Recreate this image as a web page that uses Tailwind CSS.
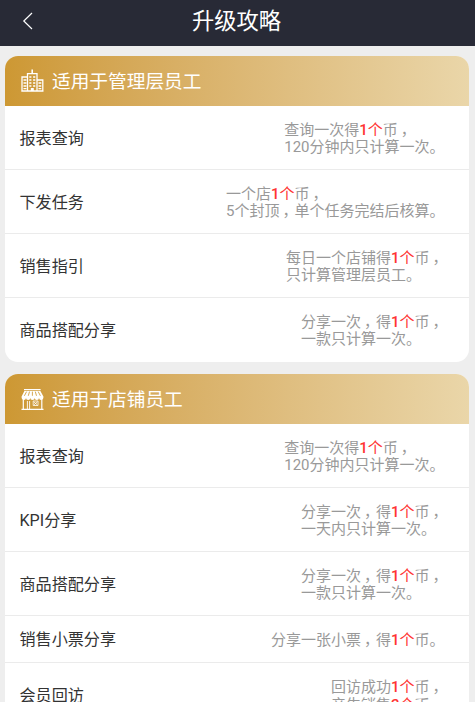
<!DOCTYPE html>
<html lang="zh-CN">
<head>
  <meta charset="UTF-8" />
  <meta name="viewport" content="width=device-width, initial-scale=1.0"/>
  <title>升级攻略</title>
  <script src="https://cdn.jsdelivr.net/npm/@tailwindcss/browser@4"></script>
  <style>
    body {
      font-family: Roboto, "Noto Sans CJK SC", sans-serif;
    }
  </style>
</head>
<body class="bg-[#eeeeee] h-[702px] overflow-hidden">

  <header class="h-[46px] bg-[#282a36] text-white grid grid-cols-[1fr_auto_1fr] items-center">
    <svg class="ml-[22px] -mt-1 w-3 h-[18px]" viewBox="0 0 12 18" fill="none" stroke="currentColor" stroke-width="1.2">
      <path d="M10 1 L1.8 9 L10 17" />
    </svg>
    <h1 class="text-[22.3px] leading-[42px] pb-1 pr-[2px]">升级攻略</h1>
  </header>

  <main class="pt-[10px] pl-[4.5px] pr-[6.5px] space-y-[12.5px]">

    <section class="bg-white rounded-[13px] overflow-hidden">
      <div class="h-[50px] pl-4 flex items-center bg-linear-to-r from-[#cd9833] to-[#ead6a9] text-white">
        <svg class="w-[23px] h-[23px] mr-[8.5px] -mt-px" viewBox="0 0 23 23" fill="none" stroke="currentColor" stroke-width="1.3">
          <path d="M0.3 22 H22.5 M1 22 V8 H6.5 M6.5 22 V4.7 H16 V22 M16 11 H21.8 V22" />
          <path d="M11.2 4.7 V0.5" stroke-width="1.6" />
          <path d="M2.5 11 H5.5 M2.5 14 H5.5 M2.5 17 H5.5 M2.5 19.7 H5.5 M8.3 8 H10.4 M12.1 8 H14.3 M8.3 11 H10.4 M12.1 11 H14.3 M8.3 14 H10.4 M12.1 14 H14.3 M8.3 17 H10.4 M12.1 17 H14.3 M17.5 14 H20.3 M17.5 17 H20.3 M17.5 19.7 H20.3" />
          <path d="M9.8 19 H12.8 V22 H9.8 Z" fill="currentColor" stroke="none" />
        </svg>
        <h2 class="text-[18.7px] pt-[2px]">适用于管理层员工</h2>
      </div>
      <ul class="divide-y divide-[#ebebeb] text-[#333333]">
        <li class="h-16 pt-[3px] pl-[15px] pr-6 flex items-center justify-between">
          <span class="text-[16.1px]">报表查询</span>
          <p class="text-[15px] leading-[17.5px] text-[#999999]">查询一次得<span class="text-[#ff3333]"><b class="font-medium">1</b>个</span>币<span class="inline-block pl-[3px] -mr-[3px]">，</span><br>120分钟内只计算一次。</p>
        </li>
        <li class="h-16 pt-[3px] pl-[15px] pr-6 flex items-center justify-between">
          <span class="text-[16.1px]">下发任务</span>
          <p class="text-[15px] leading-[17.5px] text-[#999999]">一个店<span class="text-[#ff3333]"><b class="font-medium">1</b>个</span>币<span class="inline-block pl-[3px] -mr-[3px]">，</span><br>5个封顶<span class="inline-block pl-[3px] -mr-[3px]">，</span>单个任务完结后核算。</p>
        </li>
        <li class="h-16 pt-[3px] pl-[15px] pr-6 flex items-center justify-between">
          <span class="text-[16.1px]">销售指引</span>
          <p class="text-[15px] leading-[17.5px] text-[#999999]">每日一个店铺得<span class="text-[#ff3333]"><b class="font-medium">1</b>个</span>币<span class="inline-block pl-[3px] -mr-[3px]">，</span><br>只计算管理层员工。</p>
        </li>
        <li class="h-[63.5px] pt-[3px] pl-[15px] pr-6 flex items-center justify-between">
          <span class="text-[16.1px]">商品搭配分享</span>
          <p class="text-[15px] leading-[17.5px] text-[#999999]">分享一次<span class="inline-block pl-[3px] -mr-[3px]">，</span>得<span class="text-[#ff3333]"><b class="font-medium">1</b>个</span>币<span class="inline-block pl-[3px] -mr-[3px]">，</span><br>一款只计算一次。</p>
        </li>
      </ul>
    </section>

    <section class="bg-white rounded-[13px] overflow-hidden">
      <div class="h-[50px] pl-4 flex items-center bg-linear-to-r from-[#cd9833] to-[#ead6a9] text-white">
        <svg class="w-[23px] h-[23px] mr-[8.5px]" viewBox="0 0 23 23" fill="none" stroke="currentColor" stroke-width="1.2">
          <path d="M3 1.6 H19.6" />
          <path d="M3.4 3 H19.4 L22.4 8.6 V9.6 A2.1 2 0 0 1 18 10 A2.1 2 0 0 1 13.7 10 A2.1 2 0 0 1 9.3 10 A2.1 2 0 0 1 5 10 A2.1 2 0 0 1 0.6 9.6 V8.6 Z" fill="currentColor" stroke="none" />
          <path d="M5.6 3.6 L3.4 7.8 M8.5 3.6 L7.3 7.8 M11.4 3.6 V7.8 M14.3 3.6 L15.5 7.8 M17.2 3.6 L19.4 7.8" stroke="#d19f40" stroke-width="0.9" />
          <path d="M2.3 10.5 V21 M20.8 10.5 V21 M0.5 21.4 H22.5" />
          <path d="M6.4 13 V21 M8.6 13 V21" stroke-width="0.9" />
          <path d="M12.2 13 H17 V17.5 H12.2 Z M13 14 L16.2 16.8 M16.2 14 L13 16.8" stroke-width="0.8" />
        </svg>
        <h2 class="text-[18.7px] pt-[2px]">适用于店铺员工</h2>
      </div>
      <ul class="divide-y divide-[#ebebeb] text-[#333333]">
        <li class="h-16 pt-[3px] pl-[15px] pr-6 flex items-center justify-between">
          <span class="text-[16.1px]">报表查询</span>
          <p class="text-[15px] leading-[17.5px] text-[#999999]">查询一次得<span class="text-[#ff3333]"><b class="font-medium">1</b>个</span>币<span class="inline-block pl-[3px] -mr-[3px]">，</span><br>120分钟内只计算一次。</p>
        </li>
        <li class="h-16 pt-[3px] pl-[15px] pr-6 flex items-center justify-between">
          <span class="text-[16.1px]">KPI分享</span>
          <p class="text-[15px] leading-[17.5px] text-[#999999]">分享一次<span class="inline-block pl-[3px] -mr-[3px]">，</span>得<span class="text-[#ff3333]"><b class="font-medium">1</b>个</span>币<span class="inline-block pl-[3px] -mr-[3px]">，</span><br>一天内只计算一次。</p>
        </li>
        <li class="h-16 pt-[3px] pl-[15px] pr-6 flex items-center justify-between">
          <span class="text-[16.1px]">商品搭配分享</span>
          <p class="text-[15px] leading-[17.5px] text-[#999999]">分享一次<span class="inline-block pl-[3px] -mr-[3px]">，</span>得<span class="text-[#ff3333]"><b class="font-medium">1</b>个</span>币<span class="inline-block pl-[3px] -mr-[3px]">，</span><br>一款只计算一次。</p>
        </li>
        <li class="h-[47px] pt-[3px] pl-[15px] pr-6 flex items-center justify-between">
          <span class="text-[16.1px]">销售小票分享</span>
          <p class="text-[15px] leading-[17.5px] text-[#999999]">分享一张小票<span class="inline-block pl-[3px] -mr-[3px]">，</span>得<span class="text-[#ff3333]"><b class="font-medium">1</b>个</span>币。</p>
        </li>
        <li class="h-16 pt-[3px] pl-[15px] pr-6 flex items-center justify-between">
          <span class="text-[16.1px]">会员回访</span>
          <p class="text-[15px] leading-[17.5px] text-[#999999]">回访成功<span class="text-[#ff3333]"><b class="font-medium">1</b>个</span>币<span class="inline-block pl-[3px] -mr-[3px]">，</span><br>产生销售<span class="text-[#ff3333]"><b class="font-medium">2</b>个</span>币。</p>
        </li>
      </ul>
    </section>

  </main>

</body>
</html>
